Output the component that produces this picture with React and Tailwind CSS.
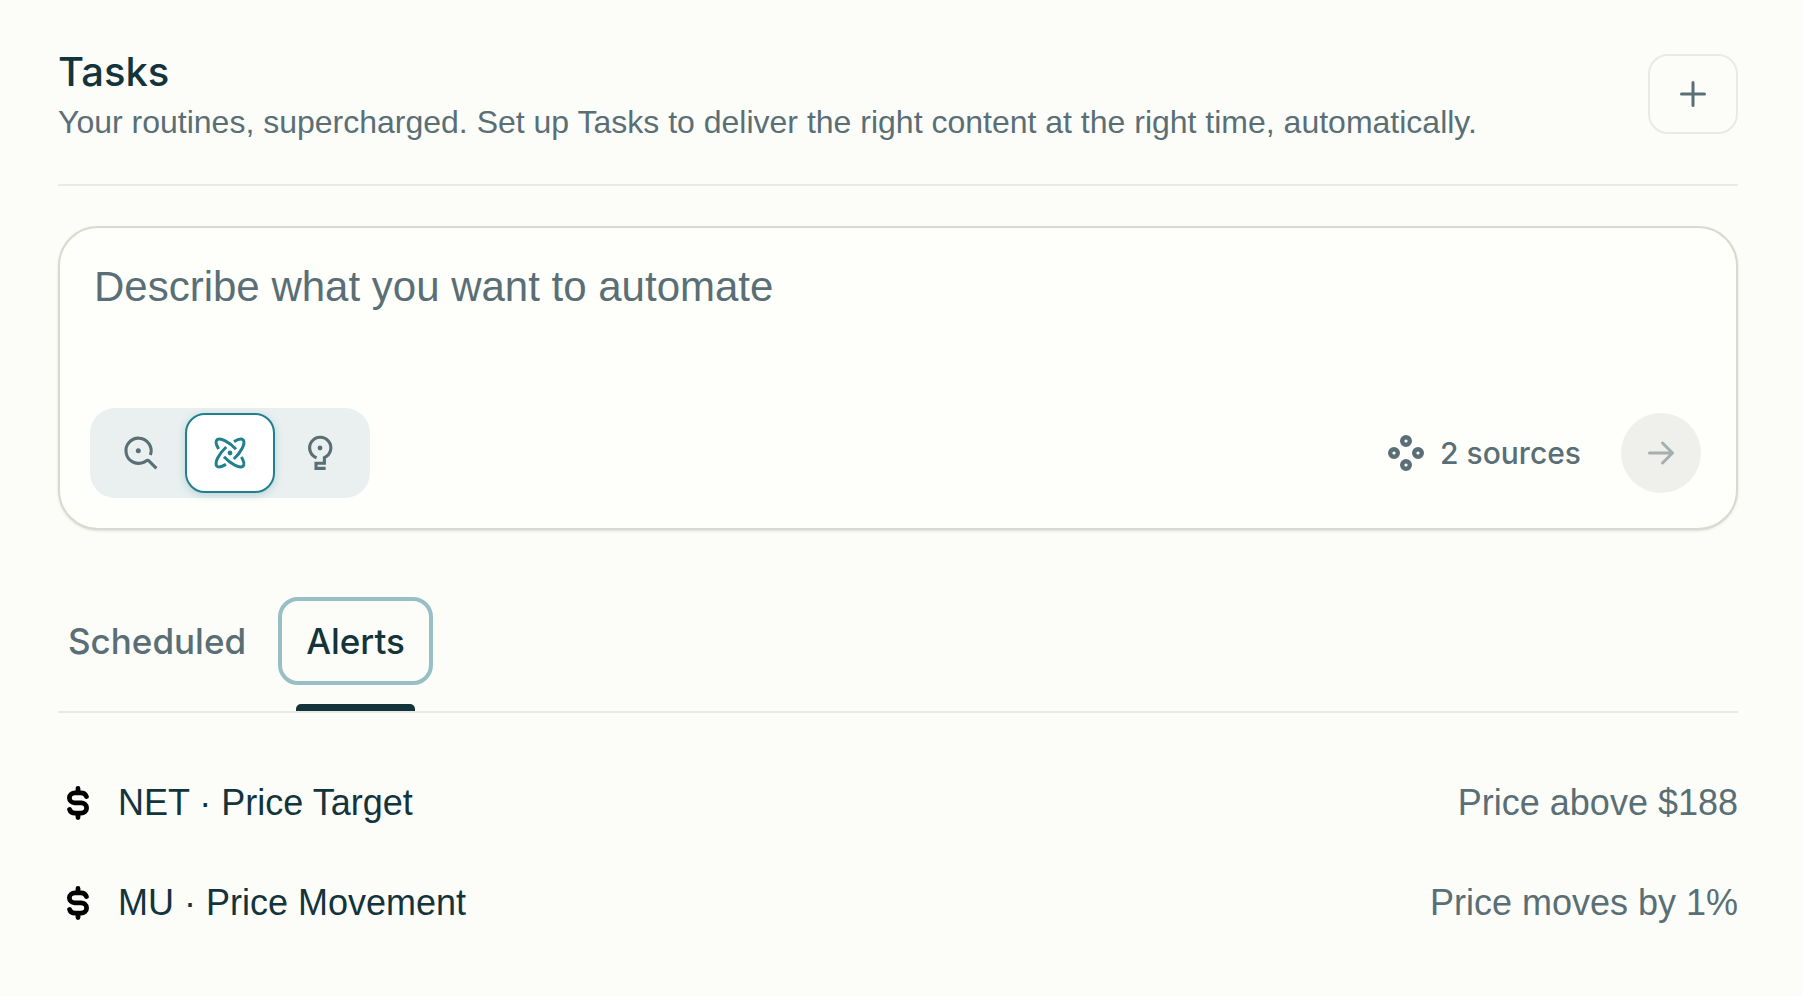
import React, { useState } from 'react';

const alerts = [
  { id: 1, title: 'NET · Price Target', rule: 'Price above $188' },
  { id: 2, title: 'MU · Price Movement', rule: 'Price moves by 1%' },
];

function SearchIcon() {
  return (
    <svg viewBox="0 0 36 36" className="size-9" fill="none" stroke="currentColor" strokeWidth="3.1" strokeLinejoin="round" aria-hidden="true">
      <path d="M28.4 20A12.6 12.6 0 1 0 22.6 26.8C24 26 25 24.8 26.4 25.4L34.4 33.4" />
      <circle cx="16.3" cy="15.7" r="2.5" fill="currentColor" stroke="none" />
    </svg>
  );
}

function ResearchIcon() {
  return (
    <svg viewBox="0 0 36 36" className="size-9" fill="none" stroke="currentColor" strokeWidth="3" aria-hidden="true">
      <path d="M6.6 14C3.8 9.2 3.4 6 5.2 4.6C8.6 2.6 17 6.6 24 14.2" />
      <path d="M29.4 22C32.2 26.8 32.6 30 30.8 31.4C27.4 33.4 19 29.4 12 21.8" />
      <path d="M22 6.6C26.8 3.8 30 3.4 31.4 5.2C33.4 8.6 29.4 17 21.8 24" />
      <path d="M14 29.4C9.2 32.2 6 32.6 4.6 30.8C2.6 27.4 6.6 19 14.2 12" />
      <circle cx="18" cy="18" r="2.4" fill="currentColor" stroke="none" />
    </svg>
  );
}

function BulbIcon() {
  return (
    <svg viewBox="0 0 36 36" className="size-9" fill="none" stroke="currentColor" strokeWidth="3.1" aria-hidden="true">
      <path d="M14.6 22.8A10.6 10.6 0 1 1 22.4 22.6V28.2H14V33.4H23.6" />
      <circle cx="18" cy="13" r="2.4" fill="currentColor" stroke="none" />
    </svg>
  );
}

function SourcesIcon() {
  return (
    <svg viewBox="0 0 36 36" className="size-9" fill="none" stroke="currentColor" strokeWidth="4.4" aria-hidden="true">
      <circle cx="18" cy="6" r="3.8" />
      <circle cx="6" cy="18" r="3.8" />
      <circle cx="30" cy="18" r="3.8" />
      <circle cx="18" cy="30" r="3.8" />
    </svg>
  );
}

function DollarIcon() {
  return (
    <svg viewBox="0 0 40 40" className="size-10 text-black" fill="none" stroke="currentColor" strokeWidth="4.8" strokeLinecap="round" strokeLinejoin="round" aria-hidden="true">
      <path d="M28.4 13.5C27.5 11 25.5 9.8 23 9.8H17C14 9.8 11.4 12 11.4 14.8S13.8 19.8 16.6 19.8H23.2C26 19.8 28.6 22 28.6 25S26 30.2 23 30.2H17C14.5 30.2 12.3 28.8 11.6 26.5M20 5.4V9.5M20 30.5V34.6" />
    </svg>
  );
}

const modes = [
  { id: 'search', label: 'Search', Icon: SearchIcon },
  { id: 'research', label: 'Research', Icon: ResearchIcon },
  { id: 'labs', label: 'Labs', Icon: BulbIcon },
];

export default function App() {
  const [mode, setMode] = useState('research');
  const [tab, setTab] = useState('Alerts');

  return (
    <div className="min-h-screen bg-[#fcfdf9] pt-[54px] pr-16 pl-[58px] font-['Liberation_Sans',Arial,sans-serif] text-[#13343b]">
      <header className="flex items-start justify-between border-b-2 border-[#e9eae5] pb-[42px]">
        <div>
          <h1 className="font-['Inter',sans-serif] text-[40px] leading-9 font-medium">Tasks</h1>
          <p className="mt-3 text-[32px] leading-10 text-[#5a6f75]">
            Your routines, supercharged. Set up Tasks to deliver the right content at the right time, automatically.
          </p>
        </div>
        <button type="button" aria-label="New task" className="flex h-20 w-[90px] items-center justify-center rounded-[20px] border-2 border-[#e9eae5] text-[#5a6f75]">
          <svg viewBox="0 0 36 36" className="size-9" stroke="currentColor" strokeWidth="3" strokeLinecap="round" aria-hidden="true">
            <path d="M18 6.5V29.5M6.5 18H29.5" />
          </svg>
        </button>
      </header>

      <form className="mt-10 rounded-[40px] border-2 border-[#d8dad0] bg-[#fefffb] pt-[30px] pr-[35px] pb-[30px] pl-[30px] shadow-sm">
        <textarea
          aria-label="Describe what you want to automate"
          placeholder="Describe what you want to automate"
          className="block h-[150px] w-full resize-none px-1 text-[42px] leading-[58px] outline-none placeholder:text-[#5a6f75]"
        />
        <div className="flex items-center justify-between">
          <div className="flex rounded-[25px] bg-[#eaf0f0] p-[5px]">
            {modes.map(({ id, label, Icon }) => (
              <button
                key={id}
                type="button"
                aria-label={label}
                aria-pressed={mode === id}
                onClick={() => setMode(id)}
                className={`flex h-20 w-[90px] items-center justify-center rounded-[20px] border-2 ${
                  mode === id ? 'border-[#21808d] bg-white text-[#21808d] shadow-[0_2px_8px_rgba(33,128,141,0.25)]' : 'border-transparent text-[#5a6f75]'
                }`}
              >
                <Icon />
              </button>
            ))}
          </div>
          <div className="flex items-center gap-10">
            <button type="button" className="flex items-center gap-4 font-['Inter',sans-serif] text-[30px] leading-10 font-medium text-[#5a6f75]">
              <SourcesIcon />
              2 sources
            </button>
            <button type="submit" disabled aria-label="Submit" className="flex size-20 items-center justify-center rounded-full bg-[#efefeb] text-[#a4afb0]">
              <svg viewBox="0 0 36 36" className="size-9" fill="none" stroke="currentColor" strokeWidth="3" strokeLinecap="round" strokeLinejoin="round" aria-hidden="true">
                <path d="M6.5 18H29.5M19.5 8L29.5 18L19.5 28" />
              </svg>
            </button>
          </div>
        </div>
      </form>

      <div role="tablist" className="mt-[67px] flex gap-6 border-b-2 border-[#e9eae5] pl-0.5 font-['Inter',sans-serif]">
        {['Scheduled', 'Alerts'].map((name) => (
          <div key={name} className="flex flex-col items-center">
            <button
              type="button"
              role="tab"
              aria-selected={tab === name}
              onClick={() => setTab(name)}
              className={`h-[88px] rounded-[20px] text-[35px] leading-10 font-medium ${
                tab === name ? 'border-4 border-[#97bfc5] px-6' : 'border-0 px-2 text-[#5a6f75]'
              }`}
            >
              {name}
            </button>
            {tab === name && <div className="mt-[19px] h-[7px] w-[119px] rounded-t-[5px] bg-[#13343b]" />}
          </div>
        ))}
      </div>

      <ul className="mt-10 text-[36px] leading-10">
        {alerts.map((a) => (
          <li key={a.id} className="flex h-[100px] items-center justify-between">
            <div className="flex items-center gap-5">
              <DollarIcon />
              <span>{a.title}</span>
            </div>
            <span className="text-[#5a6f75]">{a.rule}</span>
          </li>
        ))}
      </ul>
    </div>
  );
}
